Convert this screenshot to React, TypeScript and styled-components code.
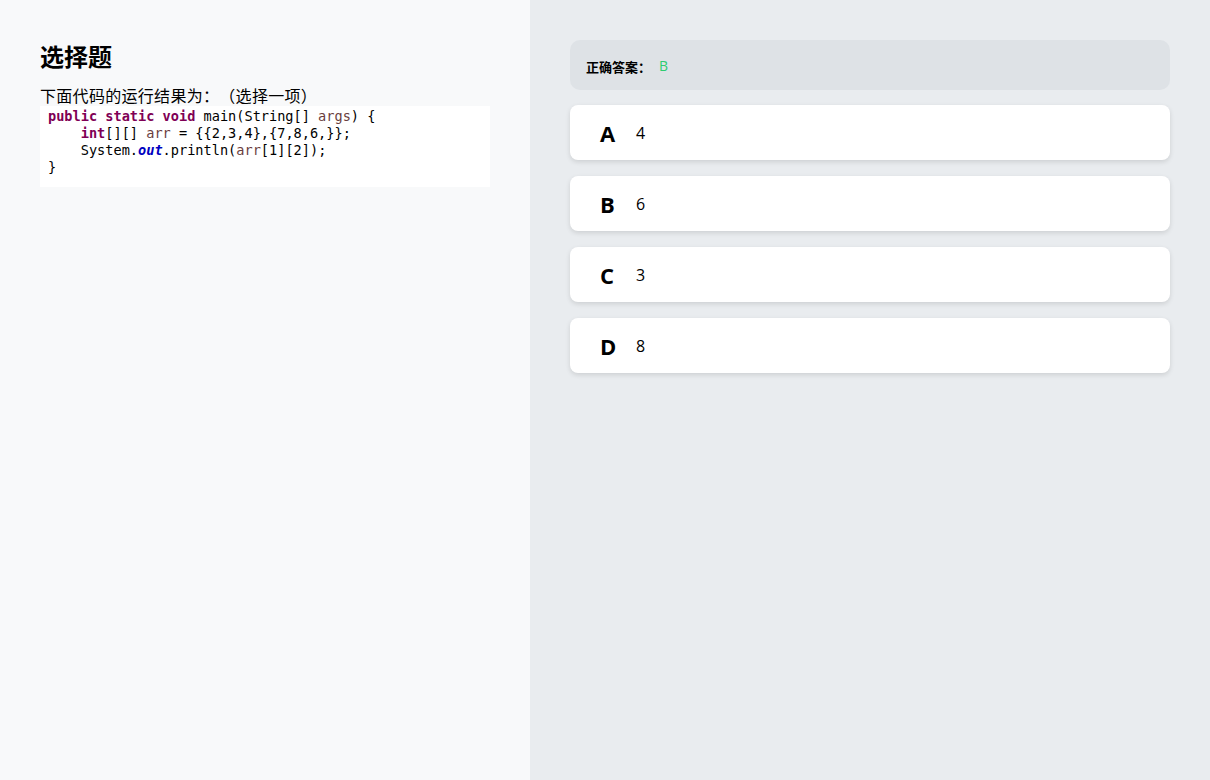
import styled, { createGlobalStyle } from "styled-components";

const GlobalStyle = createGlobalStyle`
  html, body {
    margin: 0;
    padding: 0;
    height: 100%;
  }
  body {
    font-family: "Open Sans", "Noto Sans CJK SC", sans-serif;
    color: #000;
  }
  #root {
    height: 100%;
  }
`;

const Page = styled.div`
  display: grid;
  grid-template-columns: 530px 1fr;
  width: 1210px;
  height: 780px;
`;

const QuestionPane = styled.div`
  background-color: #f8f9fa;
  padding: 40px;
`;

const Title = styled.h2`
  margin: 0 0 13px;
  font-family: "Noto Sans CJK SC", sans-serif;
  font-size: 24px;
  font-weight: 700;
  line-height: 32px;
`;

const Stem = styled.div`
  font-family: "Noto Sans CJK SC", sans-serif;
  font-size: 16px;
  line-height: 21px;
  margin-top: 6px;
  letter-spacing: 0.3px;
  text-spacing-trim: space-all;
`;

const CodeBlock = styled.pre`
  margin: 0;
  width: 450px;
  box-sizing: border-box;
  background: #ffffff;
  padding: 2px 8px 11px;
  font-family: "DejaVu Sans Mono", monospace;
  font-size: 13.6px;
  line-height: 17px;
  color: #000;
`;

const Kw = styled.span`
  color: #7f0055;
  font-weight: 700;
`;

const Var = styled.span`
  color: #6a3e3e;
`;

const Field = styled.span`
  color: #0000c0;
  font-weight: 700;
  font-style: italic;
`;

const AnswerPane = styled.div`
  background-color: #e9ecef;
  padding: 40px;
  display: flex;
  flex-direction: column;
  gap: 16px;
`;

const Correct = styled.div`
  background: #dee2e6;
  border-radius: 10px;
  height: 50px;
  margin-bottom: -1px;
  padding: 0 16px;
  display: flex;
  align-items: center;
  font-family: "Noto Sans CJK SC", sans-serif;
  font-size: 13px;
`;

const CorrectLabel = styled.span`
  font-weight: 700;
  padding-top: 2px;
`;

const CorrectValue = styled.span`
  color: #2ecc71;
  margin-left: 8px;
  font-family: "Open Sans", sans-serif;
  font-size: 14px;
`;

const Option = styled.div`
  background: #ffffff;
  border-radius: 8px;
  height: 55px;
  padding: 0 30px;
  display: flex;
  align-items: center;
  box-shadow: 0 2px 5px rgba(0, 0, 0, 0.12);
`;

const Letter = styled.span`
  width: 36px;
  font-family: "Open Sans", sans-serif;
  font-size: 22px;
  font-weight: 700;
`;

const Value = styled.span`
  font-family: "Open Sans", sans-serif;
  font-size: 16px;
`;

const options = [
  { key: "A", text: "4" },
  { key: "B", text: "6" },
  { key: "C", text: "3" },
  { key: "D", text: "8" },
];

export default function App() {
  return (
    <>
      <GlobalStyle />
      <Page>
        <QuestionPane>
          <Title>选择题</Title>
          <Stem>下面代码的运行结果为：（选择一项）</Stem>
          <CodeBlock>
            <Kw>public</Kw> <Kw>static</Kw> <Kw>void</Kw> main(String[] <Var>args</Var>) {"{"}
            {"\n    "}
            <Kw>int</Kw>[][] <Var>arr</Var> = {"{{2,3,4},{7,8,6,}};"}
            {"\n    "}System.<Field>out</Field>.println(<Var>arr</Var>[1][2]);
            {"\n}"}
          </CodeBlock>
        </QuestionPane>
        <AnswerPane>
          <Correct>
            <CorrectLabel>正确答案：</CorrectLabel>
            <CorrectValue>B</CorrectValue>
          </Correct>
          {options.map((o) => (
            <Option key={o.key}>
              <Letter>{o.key}</Letter>
              <Value>{o.text}</Value>
            </Option>
          ))}
        </AnswerPane>
      </Page>
    </>
  );
}
